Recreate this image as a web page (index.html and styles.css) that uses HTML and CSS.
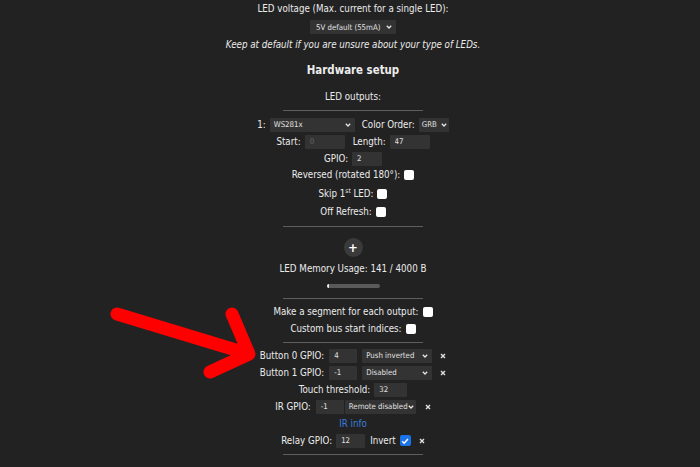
FILE: index.html
```html
<!DOCTYPE html>
<html>
<head>
<meta charset="utf-8">
<link rel="stylesheet" href="styles.css">
</head>
<body>
<div class="page">
  <div class="row">LED voltage (Max. current for a single LED):</div>
  <div class="row row-sel"><span class="sel sel-volt"><span>5V default (55mA)</span><svg class="chev" viewBox="0 0 6 4"><polyline points="0.8,0.8 3,3 5.2,0.8"/></svg></span></div>
  <div class="row row-italic">Keep at default if you are unsure about your type of LEDs.</div>
  <h2 class="heading">Hardware setup</h2>
  <div class="row row-outputs">LED outputs:</div>
  <div class="rule rule-a"></div>

  <div class="row row-first">
    <span class="lbl">1:</span>
    <span class="sel sel-type"><span>WS281x</span><svg class="chev" viewBox="0 0 6 4"><polyline points="0.8,0.8 3,3 5.2,0.8"/></svg></span>
    <span class="lbl lbl-co">Color Order:</span>
    <span class="sel sel-grb"><span>GRB</span><svg class="chev" viewBox="0 0 6 4"><polyline points="0.8,0.8 3,3 5.2,0.8"/></svg></span>
  </div>
  <div class="row">
    <span class="lbl">Start:</span>
    <input class="inp inp-40" placeholder="0">
    <span class="lbl lbl-len">Length:</span>
    <input class="inp inp-40" value="47">
  </div>
  <div class="row">
    <span class="lbl">GPIO:</span>
    <input class="inp inp-30" value="2">
  </div>
  <div class="row row-rev">
    <span class="lbl">Reversed (rotated 180°):</span>
    <span class="cb"></span>
  </div>
  <div class="row row-skip">
    <span class="lbl">Skip 1<sup>st</sup> LED:</span>
    <span class="cb"></span>
  </div>
  <div class="row row-off">
    <span class="lbl">Off Refresh:</span>
    <span class="cb"></span>
  </div>
  <div class="rule rule-b"></div>

  <div class="plus">+</div>
  <div class="row row-mem">LED Memory Usage: 141 / 4000 B</div>
  <div class="bar"><div class="bar-fill" style="width:2px"></div></div>
  <div class="rule rule-c"></div>

  <div class="row row-seg">
    <span class="lbl">Make a segment for each output:</span>
    <span class="cb"></span>
  </div>
  <div class="row">
    <span class="lbl">Custom bus start indices:</span>
    <span class="cb"></span>
  </div>
  <div class="rule rule-d"></div>

  <div class="row row-btn0">
    <span class="lbl">Button 0 GPIO:</span>
    <input class="inp inp-28 ml5" value="4">
    <span class="sel sel-btn ml5"><span>Push inverted</span><svg class="chev" viewBox="0 0 6 4"><polyline points="0.8,0.8 3,3 5.2,0.8"/></svg></span>
    <svg class="x ml8" viewBox="0 0 6 6"><path d="M1 1L5 5M5 1L1 5"/></svg>
  </div>
  <div class="row">
    <span class="lbl">Button 1 GPIO:</span>
    <input class="inp inp-28 ml5" value="-1">
    <span class="sel sel-btn ml5"><span>Disabled</span><svg class="chev" viewBox="0 0 6 4"><polyline points="0.8,0.8 3,3 5.2,0.8"/></svg></span>
    <svg class="x ml8" viewBox="0 0 6 6"><path d="M1 1L5 5M5 1L1 5"/></svg>
  </div>
  <div class="row">
    <span class="lbl">Touch threshold:</span>
    <input class="inp inp-33" value="32">
  </div>
  <div class="row">
    <span class="lbl">IR GPIO:</span>
    <input class="inp inp-28 ml5" value="-1">
    <span class="sel sel-ir ml1"><span>Remote disabled</span><svg class="chev" viewBox="0 0 6 4"><polyline points="0.8,0.8 3,3 5.2,0.8"/></svg></span>
    <svg class="x ml9" viewBox="0 0 6 6"><path d="M1 1L5 5M5 1L1 5"/></svg>
  </div>
  <div class="row"><a class="link">IR info</a></div>
  <div class="row">
    <span class="lbl">Relay GPIO:</span>
    <input class="inp inp-29" value="12">
    <span class="lbl ml5">Invert</span>
    <span class="cb cb-on"><svg viewBox="0 0 10 10"><polyline points="2.2,5.2 4.2,7.2 7.9,2.9"/></svg></span>
    <svg class="x ml8" viewBox="0 0 6 6"><path d="M1 1L5 5M5 1L1 5"/></svg>
  </div>
  <div class="rule rule-e"></div>

  <svg class="arrow" viewBox="0 0 700 467" width="700" height="467">
    <path d="M117 314 L249 354 M232 314 L249 354 L210 372"/>
  </svg>
</div>
</body>
</html>
```

FILE: styles.css
```css
html, body {
  margin: 0;
  padding: 0;
  background: #222222;
}

body {
  color: #ececec;
  font-family: "DejaVu Sans Condensed", "DejaVu Sans", sans-serif;
  font-stretch: condensed;
  font-size: 9.7px;
}

.page {
  position: relative;
  width: 700px;
  height: 467px;
  box-sizing: border-box;
  padding-left: 6px;
  display: flex;
  flex-direction: column;
  align-items: center;
  overflow: hidden;
}

.row {
  display: flex;
  align-items: center;
  justify-content: center;
  height: 17px;
  white-space: nowrap;
  flex-shrink: 0;
}

.row-sel { height: 16px; margin-top: 2px; }
.row-italic { margin-top: 1px; font-style: italic; }

.heading {
  margin: 7px 0 0;
  height: 20px;
  line-height: 20px;
  font-size: 11.4px;
  font-weight: bold;
  flex-shrink: 0;
}

.row-outputs { margin-top: 8px; }
.row-first { margin-top: 5px; }
.row-rev { height: 15px; }
.row-skip { margin-top: 3px; }
.row-off { margin-top: 1px; }
.row-mem { margin-top: 3px; }
.row-seg { margin-top: 4px; }
.row-btn0 { margin-top: 4px; }

.rule {
  width: 140px;
  height: 1px;
  background: #5e5e5e;
  flex-shrink: 0;
}
.rule-a { margin-top: 5px; }
.rule-b { margin-top: 6px; }
.rule-c { margin-top: 10px; }
.rule-d { margin-top: 5px; }
.rule-e { margin-top: 5px; }

.lbl { display: inline-block; }
.lbl sup { font-size: 6.5px; line-height: 0; vertical-align: 4px; }
.lbl-co { margin-left: 7px; }
.lbl-len { margin-left: 8px; }

.lbl + .inp,
.lbl + .sel { margin-left: 4px; }
.lbl + .cb { margin-left: 4px; }

.ml1 { margin-left: 1px !important; }
.ml5 { margin-left: 5px !important; }
.ml8 { margin-left: 8px !important; }
.ml9 { margin-left: 9px !important; }

.sel {
  display: inline-flex;
  align-items: center;
  justify-content: space-between;
  box-sizing: border-box;
  height: 14px;
  padding: 0 4px 0 4px;
  background: #333333;
  color: #e0e0e0;
  font-size: 7.8px;
  border-radius: 1px;
}
.sel-volt { width: 86px; padding-left: 6px; }
.sel-type { width: 85px; }
.sel-grb { width: 30px; margin-left: 5px; padding: 0 2px 0 3px; }
.sel-btn { width: 70px; }
.sel-ir { width: 71px; padding-right: 2px; }

.chev {
  width: 6px;
  height: 4px;
  fill: none;
  stroke: #e6e6e6;
  stroke-width: 1.3;
}

.inp {
  box-sizing: border-box;
  height: 14px;
  border: none;
  outline: none;
  margin: 0;
  padding: 0 0 0 5px;
  background: #333333;
  color: #e0e0e0;
  font-family: inherit;
  font-size: 7.8px;
  border-radius: 1px;
}
.inp::placeholder { color: #6a6a6a; }
.inp-40 { width: 40px; }
.inp-30 { width: 30px; }
.inp-28 { width: 28px; }
.inp-29 { width: 29px; }
.inp-33 { width: 33px; }

.cb {
  display: inline-flex;
  align-items: center;
  justify-content: center;
  width: 10px;
  height: 10px;
  box-sizing: border-box;
  background: #ffffff;
  border-radius: 2px;
}
.cb-on {
  width: 11px;
  height: 11px;
  background: #1a73e8;
  margin-left: 4px;
}
.cb-on svg {
  width: 10px;
  height: 10px;
  fill: none;
  stroke: #ffffff;
  stroke-width: 1.5;
}

.x {
  width: 6px;
  height: 6px;
  fill: none;
  stroke: #e0e0e0;
  stroke-width: 1.4;
}

.plus {
  margin-top: 11px;
  width: 19px;
  height: 19px;
  border-radius: 50%;
  background: #3a3a3a;
  color: #ffffff;
  font-family: "DejaVu Sans", sans-serif;
  font-size: 13px;
  font-weight: bold;
  line-height: 19px;
  text-align: center;
  flex-shrink: 0;
}

.bar {
  margin-top: 7px;
  width: 53px;
  height: 4px;
  border-radius: 2px;
  background: #5a5a5a;
  overflow: hidden;
  flex-shrink: 0;
}
.bar-fill {
  height: 100%;
  background: #f0f0f0;
}

.link {
  color: #3b7ddd;
  text-decoration: none;
}

.arrow {
  position: absolute;
  left: 0;
  top: 0;
  pointer-events: none;
}
.arrow path {
  fill: none;
  stroke: #ff0000;
  stroke-width: 13;
  stroke-linecap: round;
  stroke-linejoin: round;
}
```
